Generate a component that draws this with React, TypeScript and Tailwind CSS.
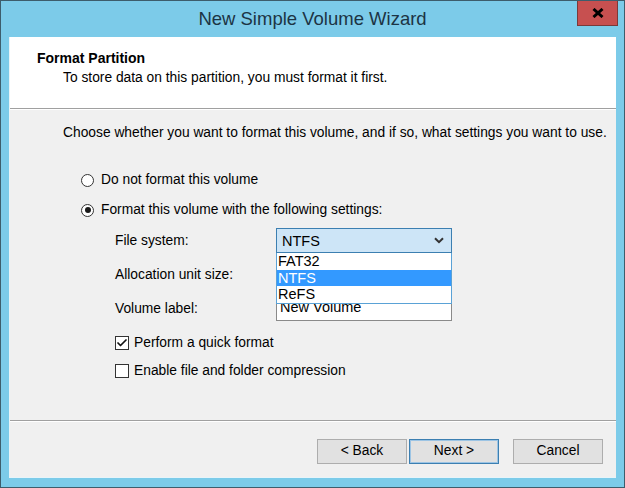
import { Check } from 'lucide-react';

const font = "font-['Liberation_Sans',Arial,sans-serif]";

function Radio({ checked, label }: { checked?: boolean; label: string }) {
  return (
    <div className="flex h-[18px] items-center">
      <span className="flex h-[13px] w-[13px] items-center justify-center rounded-full border border-[#333] bg-white">
        {checked && <span className="h-[6px] w-[6px] rounded-full bg-[#1a1a1a]" />}
      </span>
      <span className="ml-[7px]">{label}</span>
    </div>
  );
}

function CheckBox({ checked, label }: { checked?: boolean; label: string }) {
  return (
    <div className="flex h-[18px] items-center">
      <span className="flex h-[14px] w-[14px] items-center justify-center border border-[#333] bg-white">
        {checked && <Check className="h-[12px] w-[12px] text-[#111]" strokeWidth={3.5} />}
      </span>
      <span className="ml-[5px]">{label}</span>
    </div>
  );
}

function WizardButton({ label, primary }: { label: string; primary?: boolean }) {
  return (
    <button
      className={`h-[25px] w-[90px] bg-[#e1e1e1] text-[13.8px] text-black ${
        primary ? 'border border-[#3c7fb1] shadow-[inset_0_0_0_1px_#9cc4e4]' : 'border border-[#adadad]'
      }`}
    >
      {label}
    </button>
  );
}

export default function App() {
  const options = ['FAT32', 'NTFS', 'ReFS'];

  return (
    <div className={`${font} flex h-[488px] w-[625px] flex-col border border-[#3d5d6c] bg-[#7ccbe9] text-black`}>
      {/* Title bar */}
      <div className="flex h-[36px] shrink-0 items-start">
        <div className="w-[47px]" />
        <div className="flex-1 pt-[7px] text-center text-[18.5px] leading-[22px] text-[#1c3444]">
          New Simple Volume Wizard
        </div>
        <button className="mr-[6px] flex h-[25px] w-[41px] items-center justify-center border border-t-0 border-[#7a3a3a] bg-[#c75050]">
          <svg width="12" height="10" viewBox="0 0 12 10">
            <path d="M1.5 1 L10.5 9 M10.5 1 L1.5 9" stroke="#000" strokeWidth="3" />
          </svg>
        </button>
      </div>

      {/* Dialog client area */}
      <div className="mx-[8px] flex flex-1 flex-col border-l border-b border-[#e8f4f9]">
        {/* Header */}
        <div className="h-[71px] shrink-0 bg-white pl-[27px] pt-[12px]">
          <div className="text-[14px] font-bold leading-[18px]">Format Partition</div>
          <div className="ml-[26px] mt-[2px] text-[13.8px] leading-[18px]">
            To store data on this partition, you must format it first.
          </div>
        </div>
        <div className="h-px bg-[#a0a0a0]" />
        <div className="h-px bg-white" />

        {/* Body */}
        <div className="flex h-[310px] shrink-0 flex-col bg-[#f0f0f0] pl-[53px] pt-[14px] text-[13.8px] leading-[18px]">
          <div>Choose whether you want to format this volume, and if so, what settings you want to use.</div>

          <div className="ml-[18px] mt-[29px] flex flex-col gap-[12px]">
            <Radio label="Do not format this volume" />
            <Radio checked label="Format this volume with the following settings:" />
          </div>

          <div className="ml-[52px] mt-[9px] grid grid-cols-[161px_176px] gap-y-[9px]">
            <div className="flex h-[25px] items-center">File system:</div>
            <div className="relative z-10">
              <div className="flex h-[25px] items-center justify-between border border-[#3c7fb1] bg-[#cde5f7] pl-[5px] pr-[7px] text-[14.5px]">
                <span>NTFS</span>
                <svg width="10" height="7" viewBox="0 0 10 7">
                  <path d="M1 1.2 L5 5.2 L9 1.2" fill="none" stroke="#333" strokeWidth="2" />
                </svg>
              </div>
              {/* Open dropdown list */}
              <div className="absolute left-0 top-full w-full border border-t-0 border-[#5aa2d6] bg-white text-[14.5px] leading-[16px]">
                {options.map((o) => (
                  <div
                    key={o}
                    className={`h-[16.5px] pl-[1px] ${o === 'NTFS' ? 'bg-[#3399ff] text-white' : ''}`}
                  >
                    {o}
                  </div>
                ))}
              </div>
            </div>

            <div className="flex h-[25px] items-center">Allocation unit size:</div>
            <div className="h-[25px] border border-[#8a8a8a] bg-white" />

            <div className="flex h-[25px] items-center">Volume label:</div>
            <div className="h-[25px] border border-[#8a8a8a] bg-white pl-[3px] pt-[1px] text-[14.5px] leading-[18px]">
              New Volume
            </div>
          </div>

          <div className="ml-[52px] mt-[13px] flex flex-col gap-[10px]">
            <CheckBox checked label="Perform a quick format" />
            <CheckBox label="Enable file and folder compression" />
          </div>
        </div>
        <div className="h-px bg-[#a0a0a0]" />
        <div className="h-px bg-white" />

        {/* Footer buttons */}
        <div className="flex flex-1 items-start justify-end bg-[#f0f0f0] pr-[13px] pt-[17px]">
          <WizardButton label="< Back" />
          <div className="w-[2px]" />
          <WizardButton label="Next >" primary />
          <div className="w-[14px]" />
          <WizardButton label="Cancel" />
        </div>
      </div>
      <div className="h-[9px] shrink-0" />
    </div>
  );
}
